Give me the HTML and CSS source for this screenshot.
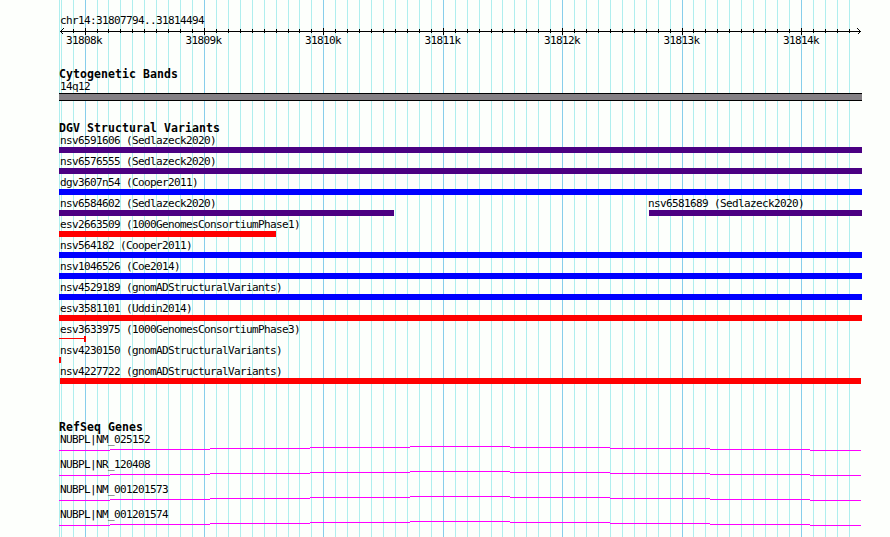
FILE: index.html
```html
<!DOCTYPE html>
<html lang="en">
<head>
    <meta charset="UTF-8">
    <title>chr14:31807794..31814494</title>
    <link rel="stylesheet" href="styles.css">
</head>
<body>
    <div class="browser">
        <svg class="grid" id="grid" width="890" height="537"></svg>
        <main class="tracks">
            <!-- Scale -->
            <section class="ruler">
                <p class="label">chr14:31807794..31814494</p>
                <svg class="axis" id="axis" width="803" height="9"></svg>
                <div class="scale">
                    <span>31808k</span>
                    <span>31809k</span>
                    <span>31810k</span>
                    <span>31811k</span>
                    <span>31812k</span>
                    <span>31813k</span>
                    <span>31814k</span>
                </div>
            </section>

            <!-- Cytogenetic bands -->
            <section class="bands">
                <h2>Cytogenetic Bands</h2>
                <p class="label">14q12</p>
                <div class="band"></div>
            </section>

            <!-- DGV variants -->
            <section class="variants">
                <h2>DGV Structural Variants</h2>
                <div class="row"><p class="label">nsv6591606 (Sedlazeck2020)</p><div class="bar complex"></div></div>
                <div class="row"><p class="label">nsv6576555 (Sedlazeck2020)</p><div class="bar complex"></div></div>
                <div class="row"><p class="label">dgv3607n54 (Cooper2011)</p><div class="bar gain"></div></div>
                <div class="row split">
                    <div class="left"><p class="label">nsv6584602 (Sedlazeck2020)</p><div class="bar complex"></div></div>
                    <div class="right"><p class="label">nsv6581689 (Sedlazeck2020)</p><div class="bar complex"></div></div>
                </div>
                <div class="row"><p class="label">esv2663509 (1000GenomesConsortiumPhase1)</p><div class="bar loss partial"></div></div>
                <div class="row"><p class="label">nsv564182 (Cooper2011)</p><div class="bar gain"></div></div>
                <div class="row"><p class="label">nsv1046526 (Coe2014)</p><div class="bar gain"></div></div>
                <div class="row"><p class="label">nsv4529189 (gnomADStructuralVariants)</p><div class="bar gain"></div></div>
                <div class="row"><p class="label">esv3581101 (Uddin2014)</p><div class="bar loss"></div></div>
                <div class="row"><p class="label">esv3633975 (1000GenomesConsortiumPhase3)</p><div class="bar range"></div></div>
                <div class="row"><p class="label">nsv4230150 (gnomADStructuralVariants)</p><div class="bar loss tiny"></div></div>
                <div class="row"><p class="label">nsv4227722 (gnomADStructuralVariants)</p><div class="bar loss inset"></div></div>
            </section>

            <!-- Genes -->
            <section class="genes">
                <h2>RefSeq Genes</h2>
                <div class="gene"><p class="label">NUBPL|NM_025152</p><svg class="intron" width="803" height="5"><use href="#intron"/></svg></div>
                <div class="gene"><p class="label">NUBPL|NR_120408</p><svg class="intron" width="803" height="5"><use href="#intron"/></svg></div>
                <div class="gene"><p class="label">NUBPL|NM_001201573</p><svg class="intron" width="803" height="5"><use href="#intron"/></svg></div>
                <div class="gene"><p class="label">NUBPL|NM_001201574</p><svg class="intron" width="803" height="5"><use href="#intron"/></svg></div>
            </section>
        </main>
    </div>

    <svg class="defs" width="0" height="0">
        <defs>
            <path id="intron" d="M0 4.5H51M51 3.5H151M151 2.5H251M251 1.5H351M351 .5H451M451 1.5H551M551 2.5H651M651 3.5H751M751 4.5H802"/>
        </defs>
    </svg>

    <script>
        const start = 31807794;
        const end = 31814494;
        const scale = 800 / (end - start + 1);

        let grid = '<path class="minor" d="M59.5 0V537"/>';
        let axis = '<path d="M1 4.5H802M4.5 1.5L1.5 4.5L4.5 7.5M798.5 1.5L801.5 4.5L798.5 7.5"/>';

        // one line every 100 bp, a major one every 1000 bp
        for (let pos = 31807800; pos < end - 50; pos += 100) {
            const x = 60.5 + Math.round((pos - start) * scale);
            const major = pos % 1000 === 0;
            grid += `<path class="${major ? 'major' : 'minor'}" d="M${x} 0V537"/>`;
            if (pos > 31807800) {
                axis += `<path d="M${x - 59} ${major ? '1V8' : '2V6'}"/>`;
            }
        }

        document.getElementById('grid').innerHTML = grid;
        document.getElementById('axis').innerHTML = axis;
    </script>
</body>
</html>
```
FILE: styles.css
```css
body {
    margin: 0;
    background-color: #fdfffc;
    color: #000;
    font-family: "DejaVu Sans Mono", monospace;
}
.browser {
    display: grid;
    width: 890px;
    height: 537px;
    overflow: hidden;
}
.grid, .tracks {
    grid-area: 1 / 1;
}
svg {
    display: block;
    fill: none;
    shape-rendering: crispEdges;
}
.minor {
    stroke: #afeeee;
}
.major {
    stroke: #87ceeb;
}
.tracks {
    width: 803px;
    padding: 15px 0 0 59px;
}
h2 {
    margin: 0;
    height: 12px;
    font-size: 11.5px;
    line-height: 10px;
    letter-spacing: 0.077px;
    white-space: nowrap;
}
.label, .scale {
    margin: 0;
    height: 12px;
    font-size: 11px;
    line-height: 12px;
    letter-spacing: -0.622px;
    white-space: nowrap;
}
.label {
    padding-left: 1px;
}
.ruler {
    height: 54px;
}
.axis {
    stroke: #000;
}
.scale {
    display: flex;
    justify-content: space-between;
    width: 753px;
    margin-left: 7px;
    margin-top: -1px;
}
.bands {
    height: 54px;
}
.band {
    height: 6px;
    background-color: #848084;
    border-top: 1px solid #000;
    border-bottom: 1px solid #000;
}
.variants {
    height: 299px;
}
.row {
    height: 21px;
}
.split {
    display: flex;
    justify-content: space-between;
}
.left {
    width: 335px;
}
.right {
    width: 213px;
}
.right .label {
    padding-left: 0;
    margin-left: -1px;
}
.bar {
    height: 6px;
}
.complex {
    background-color: #4b0082;
}
.gain {
    background-color: #0000ff;
}
.loss {
    background-color: #ff0000;
}
.partial {
    width: 217px;
}
.range {
    width: 25px;
    border-right: 2px solid #ff0000;
    background: linear-gradient(#ff0000, #ff0000) 0 2px / 100% 1px no-repeat;
}
.tiny {
    width: 2px;
}
.inset {
    margin: 0 1px;
}
.gene {
    height: 25px;
}
.intron {
    stroke: #ff00ff;
}
.defs {
    position: absolute;
}
```
